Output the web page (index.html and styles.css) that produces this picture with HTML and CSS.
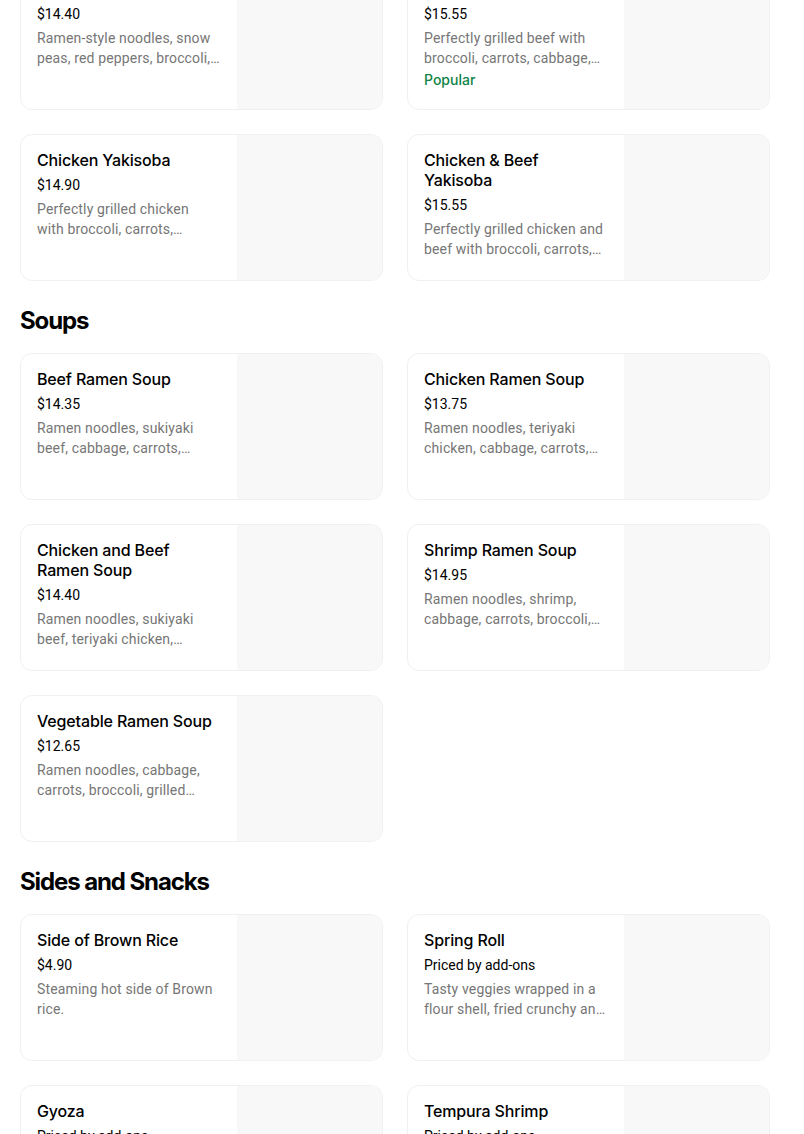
FILE: index.html
```html
<!DOCTYPE html>
<html lang="en">
<head>
<meta charset="utf-8">
<title>Menu</title>
<link rel="stylesheet" href="styles.css">
</head>
<body>
<main class="menu">
  <section class="section section-first">
    <div class="grid">
      <div class="card">
        <div class="info">
          <h3 class="title">Vegetable Yakisoba</h3>
          <div class="price">$14.40</div>
          <p class="desc">Ramen-style noodles, snow peas, red peppers, broccoli,…</p>
        </div>
        <div class="thumb"></div>
      </div>
      <div class="card">
        <div class="info">
          <h3 class="title">Beef Yakisoba</h3>
          <div class="price">$15.55</div>
          <p class="desc">Perfectly grilled beef with broccoli, carrots, cabbage,…</p>
          <div class="tag">Popular</div>
        </div>
        <div class="thumb"></div>
      </div>
      <div class="card">
        <div class="info">
          <h3 class="title">Chicken Yakisoba</h3>
          <div class="price">$14.90</div>
          <p class="desc">Perfectly grilled chicken<br>with broccoli, carrots,…</p>
        </div>
        <div class="thumb"></div>
      </div>
      <div class="card">
        <div class="info">
          <h3 class="title">Chicken &amp; Beef Yakisoba</h3>
          <div class="price">$15.55</div>
          <p class="desc">Perfectly grilled chicken and beef with broccoli, carrots,…</p>
        </div>
        <div class="thumb"></div>
      </div>
    </div>
  </section>

  <section class="section">
    <h2 class="heading">Soups</h2>
    <div class="grid">
      <div class="card">
        <div class="info">
          <h3 class="title">Beef Ramen Soup</h3>
          <div class="price">$14.35</div>
          <p class="desc">Ramen noodles, sukiyaki beef, cabbage, carrots,…</p>
        </div>
        <div class="thumb"></div>
      </div>
      <div class="card">
        <div class="info">
          <h3 class="title">Chicken Ramen Soup</h3>
          <div class="price">$13.75</div>
          <p class="desc">Ramen noodles, teriyaki chicken, cabbage, carrots,…</p>
        </div>
        <div class="thumb"></div>
      </div>
      <div class="card">
        <div class="info">
          <h3 class="title">Chicken and Beef Ramen Soup</h3>
          <div class="price">$14.40</div>
          <p class="desc">Ramen noodles, sukiyaki beef, teriyaki chicken,…</p>
        </div>
        <div class="thumb"></div>
      </div>
      <div class="card">
        <div class="info">
          <h3 class="title">Shrimp Ramen Soup</h3>
          <div class="price">$14.95</div>
          <p class="desc">Ramen noodles, shrimp, cabbage, carrots, broccoli,…</p>
        </div>
        <div class="thumb"></div>
      </div>
      <div class="card">
        <div class="info">
          <h3 class="title">Vegetable Ramen Soup</h3>
          <div class="price">$12.65</div>
          <p class="desc">Ramen noodles, cabbage, carrots, broccoli, grilled…</p>
        </div>
        <div class="thumb"></div>
      </div>
    </div>
  </section>

  <section class="section">
    <h2 class="heading">Sides and Snacks</h2>
    <div class="grid">
      <div class="card">
        <div class="info">
          <h3 class="title">Side of Brown Rice</h3>
          <div class="price">$4.90</div>
          <p class="desc">Steaming hot side of Brown rice.</p>
        </div>
        <div class="thumb"></div>
      </div>
      <div class="card">
        <div class="info">
          <h3 class="title">Spring Roll</h3>
          <div class="price">Priced by add-ons</div>
          <p class="desc">Tasty veggies wrapped in a flour shell, fried crunchy an…</p>
        </div>
        <div class="thumb"></div>
      </div>
      <div class="card">
        <div class="info">
          <h3 class="title">Gyoza</h3>
          <div class="price">Priced by add-ons</div>
          <p class="desc">Pan-fried dumplings filled with pork and vegetables.</p>
        </div>
        <div class="thumb"></div>
      </div>
      <div class="card">
        <div class="info">
          <h3 class="title">Tempura Shrimp</h3>
          <div class="price">Priced by add-ons</div>
          <p class="desc">Crispy battered shrimp served with tempura sauce.</p>
        </div>
        <div class="thumb"></div>
      </div>
    </div>
  </section>
</main>
</body>
</html>
```

FILE: styles.css
```css
* { box-sizing: border-box; }

html, body {
  margin: 0;
  padding: 0;
  background: #ffffff;
}

body {
  font-family: Inter, "Noto Sans", "Liberation Sans", sans-serif;
  color: #000000;
  overflow: hidden;
}

.menu {
  width: 750px;
  margin-left: 20px;
  margin-top: -37px;
}

.section {
  margin-top: 24px;
}

.section-first {
  margin-top: 0;
}

.heading {
  margin: 0 0 16px 0;
  font-size: 24px;
  line-height: 32px;
  font-weight: 700;
  letter-spacing: -1.1px;
  color: #000;
}

.grid {
  display: grid;
  grid-template-columns: 363px 363px;
  column-gap: 24px;
  row-gap: 24px;
}

.card {
  display: flex;
  height: 147px;
  border: 1px solid #f0f0f0;
  border-radius: 12px;
  overflow: hidden;
  background: #ffffff;
}

.info {
  width: 216px;
  flex: none;
  padding: 15px 16px 0 16px;
}

.thumb {
  flex: 1;
  background: #f8f8f8;
}

.title {
  margin: 0;
  font-size: 16px;
  line-height: 20px;
  font-weight: 500;
  letter-spacing: -0.15px;
  color: #000;
}

.price {
  margin-top: 5px;
  font-family: Roboto, Inter, "Liberation Sans", sans-serif;
  font-size: 14px;
  line-height: 20px;
  font-weight: 400;
  color: #000;
}

.desc {
  margin: 4px 0 0 0;
  font-family: Roboto, Inter, "Liberation Sans", sans-serif;
  font-size: 14px;
  line-height: 20px;
  letter-spacing: 0.15px;
  color: #767676;
  display: -webkit-box;
  -webkit-line-clamp: 2;
  -webkit-box-orient: vertical;
  overflow: hidden;
}

.tag {
  margin-top: 2px;
  font-size: 14px;
  line-height: 20px;
  font-weight: 500;
  color: #0e8345;
}
```
